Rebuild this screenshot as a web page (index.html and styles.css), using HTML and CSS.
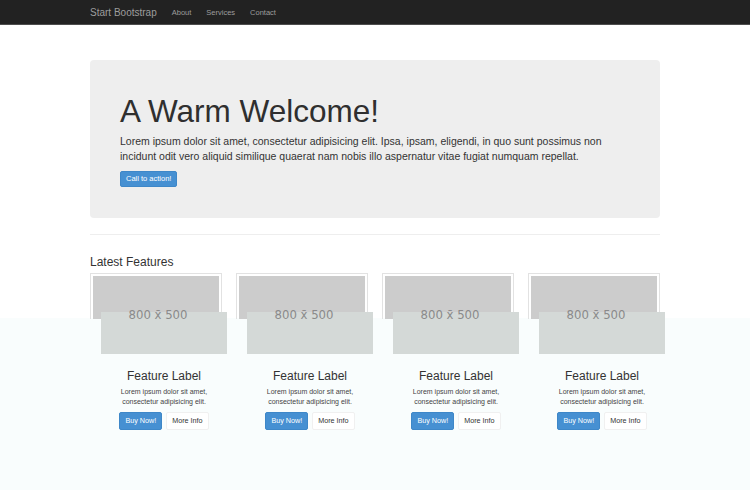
FILE: index.html
```html
<!DOCTYPE html>
<html>
<head>
<meta charset="utf-8">
<link rel="stylesheet" href="styles.css">
</head>
<body>
<nav class="navbar">
  <div class="nav-inner">
    <span class="brand">Start Bootstrap</span>
    <span class="nav-link">About</span>
    <span class="nav-link">Services</span>
    <span class="nav-link">Contact</span>
  </div>
</nav>
<main class="container">
  <section class="jumbotron">
    <h1>A Warm Welcome!</h1>
    <p>Lorem ipsum dolor sit amet, consectetur adipisicing elit. Ipsa, ipsam, eligendi, in quo sunt possimus non incidunt odit vero aliquid similique quaerat nam nobis illo aspernatur vitae fugiat numquam repellat.</p>
    <span class="btn btn-primary btn-lg">Call to action!</span>
  </section>
  <hr class="divider">
  <h3 class="section-title">Latest Features</h3>
  <div class="features">
    <div class="col">
      <div class="thumb"><div class="img"></div></div>
      <div class="img-shift"></div>
      <span class="img-text">800 x̄ 500</span>
      <div class="caption">
        <h4>Feature Label</h4>
        <p>Lorem ipsum dolor sit amet, consectetur adipisicing elit.</p>
        <div class="actions"><span class="btn btn-primary">Buy Now!</span><span class="btn btn-default">More Info</span></div>
      </div>
    </div>
    <div class="col">
      <div class="thumb"><div class="img"></div></div>
      <div class="img-shift"></div>
      <span class="img-text">800 x̄ 500</span>
      <div class="caption">
        <h4>Feature Label</h4>
        <p>Lorem ipsum dolor sit amet, consectetur adipisicing elit.</p>
        <div class="actions"><span class="btn btn-primary">Buy Now!</span><span class="btn btn-default">More Info</span></div>
      </div>
    </div>
    <div class="col">
      <div class="thumb"><div class="img"></div></div>
      <div class="img-shift"></div>
      <span class="img-text">800 x̄ 500</span>
      <div class="caption">
        <h4>Feature Label</h4>
        <p>Lorem ipsum dolor sit amet, consectetur adipisicing elit.</p>
        <div class="actions"><span class="btn btn-primary">Buy Now!</span><span class="btn btn-default">More Info</span></div>
      </div>
    </div>
    <div class="col">
      <div class="thumb"><div class="img"></div></div>
      <div class="img-shift"></div>
      <span class="img-text">800 x̄ 500</span>
      <div class="caption">
        <h4>Feature Label</h4>
        <p>Lorem ipsum dolor sit amet, consectetur adipisicing elit.</p>
        <div class="actions"><span class="btn btn-primary">Buy Now!</span><span class="btn btn-default">More Info</span></div>
      </div>
    </div>
  </div>
</main>
</body>
</html>
```
FILE: styles.css
```css
html {
  min-height: 100%;
  background: linear-gradient(to bottom, #ffffff 0, #ffffff 318px, #f9fdfd 318px, #f9fdfd 100%);
}
body {
  margin: 0;
  min-height: 490px;
  font-family: "Liberation Sans", Arial, sans-serif;
  color: #333;
}
.navbar {
  height: 24px;
  background: #222;
  border-bottom: 1px solid #4d4d4d;
}
.nav-inner {
  width: 570px;
  margin: 0 auto;
  height: 24px;
  display: flex;
  align-items: center;
}
.brand {
  font-size: 10px;
  color: #9d9d9d;
  margin-right: 15px;
}
.nav-link {
  font-size: 7.5px;
  color: #9d9d9d;
  margin-right: 15px;
}
.container {
  width: 570px;
  margin: 0 auto;
  padding-top: 35px;
}
.jumbotron {
  background: #eee;
  border-radius: 4px;
  padding: 34px 30px 28px 30px;
  height: 96px;
}
.jumbotron h1 {
  margin: 0;
  font-size: 31.5px;
  font-weight: normal;
  line-height: 34px;
  color: #2f2f2f;
}
.jumbotron p {
  margin: 6px 0 3px;
  font-size: 10.5px;
  line-height: 15px;
}
.btn {
  display: inline-block;
  box-sizing: border-box;
  border-radius: 2px;
  font-size: 7px;
  text-align: center;
  white-space: nowrap;
}
.btn-primary {
  background: #4690d2;
  color: #fff;
  border: 1px solid #3e87c8;
}
.btn-lg {
  font-size: 7.5px;
  height: 16px;
  line-height: 14px;
  padding: 0 5px;
}
.divider {
  border: 0;
  border-top: 1px solid #eee;
  margin: 16px 0 0;
}
.section-title {
  margin: 0;
  padding-top: 21px;
  font-size: 12px;
  font-weight: normal;
  line-height: 13px;
}
.features {
  display: flex;
  gap: 14px;
  margin-top: 4px;
}
.col {
  width: 132px;
  position: relative;
}
.thumb {
  border: 1px solid #e2e2e2;
  border-bottom: 0;
  padding: 2px 2px 0;
}
.img {
  height: 43px;
  background: #cccccc;
}
.img-shift {
  height: 42px;
  margin: -7px -5px 0 11px;
  background: #d4d9d7;
  position: relative;
}
.img-text {
  position: absolute;
  left: 0;
  right: 0;
  top: 34px;
  text-align: center;
  padding-left: 4px;
  font-family: "DejaVu Sans Condensed", "DejaVu Sans", sans-serif;
  font-size: 13px;
  color: #8a8a8a;
}
.caption {
  margin: 0 -5px 0 11px;
  text-align: center;
}
.caption h4 {
  margin: 15px 0 0;
  font-size: 12px;
  font-weight: normal;
  line-height: 14px;
}
.caption p {
  margin: 4px 0 5px;
  padding: 0 14px;
  font-size: 7px;
  line-height: 10px;
  color: #444;
}
.actions {
  display: flex;
  justify-content: center;
  gap: 4px;
}
.actions .btn {
  height: 18px;
  line-height: 16px;
  padding: 0 5px;
  min-width: 41px;
  font-size: 7.2px;
}
.btn-default {
  background: #fff;
  color: #333;
  border: 1px solid #f0f0f0;
}
```
